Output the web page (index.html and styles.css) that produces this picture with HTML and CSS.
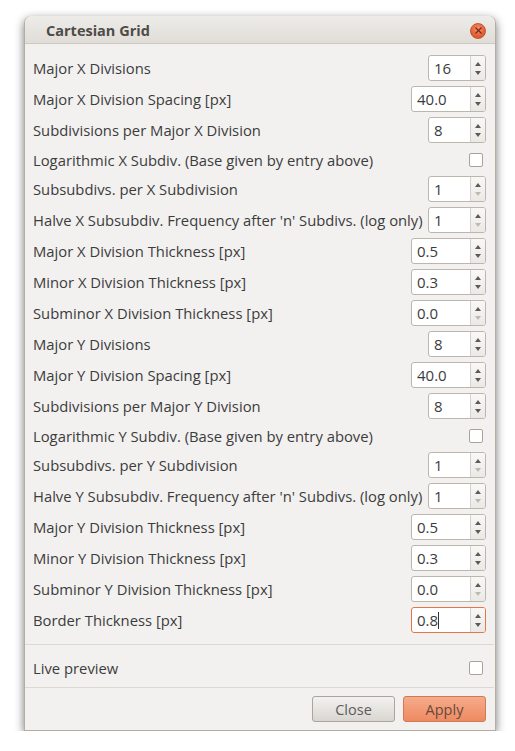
FILE: index.html
```html
<!DOCTYPE html>
<html lang="en">
  <head>
    <meta charset="UTF-8" />
    <meta name="viewport" content="width=device-width, initial-scale=1.0" />
    <title>Cartesian Grid</title>
    <link rel="stylesheet" href="styles.css">
  </head>
  <body>
    <div class="window">
      <div class="titlebar">
        <span class="title">Cartesian Grid</span>
        <span class="close-btn">
          <svg width="7" height="7" viewBox="0 0 7 7"><path d="M0.5 0.5L6.5 6.5M6.5 0.5L0.5 6.5" stroke="#6e2a12" stroke-width="1.1"/></svg>
        </span>
      </div>
      <div class="content">
        <div class="params">
          <div class="row"><span class="label">Major X Divisions</span><div class="spin narrow"><span class="value">16</span><span class="arrows"><i class="up"></i><i class="down"></i></span></div></div>
          <div class="row"><span class="label">Major X Division Spacing [px]</span><div class="spin"><span class="value">40.0</span><span class="arrows"><i class="up"></i><i class="down"></i></span></div></div>
          <div class="row"><span class="label">Subdivisions per Major X Division</span><div class="spin narrow"><span class="value">8</span><span class="arrows"><i class="up"></i><i class="down"></i></span></div></div>
          <div class="row check-row"><span class="label">Logarithmic X Subdiv. (Base given by entry above)</span><span class="checkbox"></span></div>
          <div class="row"><span class="label">Subsubdivs. per X Subdivision</span><div class="spin narrow"><span class="value">1</span><span class="arrows"><i class="up"></i><i class="down off"></i></span></div></div>
          <div class="row"><span class="label">Halve X Subsubdiv. Frequency after 'n' Subdivs. (log only)</span><div class="spin narrow"><span class="value">1</span><span class="arrows"><i class="up"></i><i class="down off"></i></span></div></div>
          <div class="row"><span class="label">Major X Division Thickness [px]</span><div class="spin"><span class="value">0.5</span><span class="arrows"><i class="up"></i><i class="down"></i></span></div></div>
          <div class="row"><span class="label">Minor X Division Thickness [px]</span><div class="spin"><span class="value">0.3</span><span class="arrows"><i class="up"></i><i class="down"></i></span></div></div>
          <div class="row"><span class="label">Subminor X Division Thickness [px]</span><div class="spin"><span class="value">0.0</span><span class="arrows"><i class="up"></i><i class="down off"></i></span></div></div>
          <div class="row"><span class="label">Major Y Divisions</span><div class="spin narrow"><span class="value">8</span><span class="arrows"><i class="up"></i><i class="down"></i></span></div></div>
          <div class="row"><span class="label">Major Y Division Spacing [px]</span><div class="spin"><span class="value">40.0</span><span class="arrows"><i class="up"></i><i class="down"></i></span></div></div>
          <div class="row"><span class="label">Subdivisions per Major Y Division</span><div class="spin narrow"><span class="value">8</span><span class="arrows"><i class="up"></i><i class="down"></i></span></div></div>
          <div class="row check-row"><span class="label">Logarithmic Y Subdiv. (Base given by entry above)</span><span class="checkbox"></span></div>
          <div class="row"><span class="label">Subsubdivs. per Y Subdivision</span><div class="spin narrow"><span class="value">1</span><span class="arrows"><i class="up"></i><i class="down off"></i></span></div></div>
          <div class="row"><span class="label">Halve Y Subsubdiv. Frequency after 'n' Subdivs. (log only)</span><div class="spin narrow"><span class="value">1</span><span class="arrows"><i class="up"></i><i class="down off"></i></span></div></div>
          <div class="row"><span class="label">Major Y Division Thickness [px]</span><div class="spin"><span class="value">0.5</span><span class="arrows"><i class="up"></i><i class="down"></i></span></div></div>
          <div class="row"><span class="label">Minor Y Division Thickness [px]</span><div class="spin"><span class="value">0.3</span><span class="arrows"><i class="up"></i><i class="down"></i></span></div></div>
          <div class="row"><span class="label">Subminor Y Division Thickness [px]</span><div class="spin"><span class="value">0.0</span><span class="arrows"><i class="up"></i><i class="down off"></i></span></div></div>
          <div class="row"><span class="label">Border Thickness [px]</span><div class="spin focused"><span class="value">0.8<span class="caret"></span></span><span class="arrows"><i class="up"></i><i class="down"></i></span></div></div>
        </div>
        <div class="separator"></div>
        <div class="row check-row preview-row"><span class="label">Live preview</span><span class="checkbox"></span></div>
        <div class="separator"></div>
        <div class="buttons">
          <button class="btn">Close</button>
          <button class="btn apply">Apply</button>
        </div>
      </div>
    </div>
  </body>
</html>
```
FILE: styles.css
```css
* {
  margin: 0;
  padding: 0;
  box-sizing: border-box;
}
body {
  font-family: "Open Sans", "DejaVu Sans", sans-serif;
  background-color: #fff;
  padding: 16px 19px 0 24px;
}
.window {
  width: 472px;
  height: 715px;
  background: #f2f1f0;
  border: 1px solid #b6ada2;
  border-top: none;
  border-radius: 7px 7px 0 0;
  box-shadow: 0 3px 10px rgba(0, 0, 0, 0.55);
  display: flex;
  flex-direction: column;
}
.titlebar {
  height: 28px;
  display: flex;
  align-items: center;
  justify-content: space-between;
  padding: 0 9px 0 21px;
  background: linear-gradient(#eeece9, #e0ddd8);
  border-bottom: 1px solid #cfc8be;
  border-radius: 7px 7px 0 0;
}
.title {
  font-size: 14.5px;
  font-weight: bold;
  color: #4e4b47;
  margin-top: 1px;
}
.close-btn {
  width: 16px;
  height: 16px;
  border-radius: 50%;
  background: radial-gradient(circle at 50% 35%, #f49070, #e0582c 70%);
  border: 1px solid #c9542c;
  display: flex;
  align-items: center;
  justify-content: center;
  margin-top: 2px;
}
.content {
  flex: 1;
  padding: 11px 9px 0 8px;
  display: flex;
  flex-direction: column;
}
.params {
  display: flex;
  flex-direction: column;
  gap: 5px;
}
.row {
  height: 26px;
  display: flex;
  align-items: center;
  justify-content: space-between;
  font-size: 14.8px;
  color: #3c3c3c;
}
.check-row {
  height: 23px;
}
.label {
  white-space: nowrap;
}
.checkbox {
  width: 14px;
  height: 14px;
  margin-right: 3px;
  background: #fff;
  border: 1px solid #a9a298;
  border-radius: 2px;
}
.spin {
  width: 75px;
  height: 26px;
  display: flex;
  background: #fff;
  border: 1px solid #bdb6ac;
  border-radius: 3px;
}
.spin.narrow {
  width: 58px;
}
.spin.focused {
  border-color: #e6754a;
}
.value {
  flex: 1;
  padding-left: 5px;
  font-size: 15px;
  line-height: 24px;
  color: #3c3c3c;
  display: flex;
  align-items: center;
}
.caret {
  width: 1px;
  height: 17px;
  background: #333;
}
.arrows {
  width: 15px;
  display: flex;
  flex-direction: column;
  align-items: center;
  justify-content: center;
  gap: 5px;
  border-left: 1px solid #d6d1ca;
  background: linear-gradient(#f9f8f7, #ebe9e6);
  border-radius: 0 2px 2px 0;
}
.arrows i {
  width: 0;
  height: 0;
  border-left: 3px solid transparent;
  border-right: 3px solid transparent;
}
.arrows .up {
  border-bottom: 4px solid #5c5a57;
}
.arrows .down {
  border-top: 4px solid #5c5a57;
}
.arrows .down.off {
  border-top-color: #bdb9b3;
}
.separator {
  height: 1px;
  background: #dcd8d2;
  margin: 0 -8px;
}
.params + .separator {
  margin-top: 11px;
}
.preview-row {
  margin: 11px 0 8px;
}
.buttons {
  display: flex;
  justify-content: flex-end;
  gap: 8px;
  margin-top: 8px;
}
.btn {
  width: 83px;
  height: 26px;
  font-family: inherit;
  font-size: 14.5px;
  color: #5d5c5a;
  border: 1px solid #aaa59d;
  border-radius: 3px;
  background: linear-gradient(#f3f2f0, #d9d6d1);
}
.btn.apply {
  color: #6a4a3c;
  border-color: #cf7a55;
  background: linear-gradient(#f6ab8a, #ee8a62);
}
```
